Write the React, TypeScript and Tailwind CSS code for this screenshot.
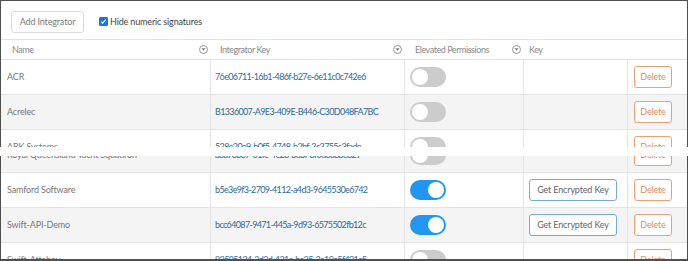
import React from "react";

type Item = { name: string; id: string; on: boolean; gray: boolean };

const top: Item[] = [
  { name: "ACR", id: "76e06711-16b1-486f-b27e-6e11c0c742e6", on: false, gray: false },
  { name: "Acrelec", id: "B1336007-A9E3-409E-B446-C30D048FA7BC", on: false, gray: true },
  { name: "ARK Systems", id: "528e20e9-b0f5-4748-b2bf-3c3755c3fade", on: false, gray: false },
];

const bottom: Item[] = [
  { name: "Royal Queensland Yacht Squadron", id: "a8a78b87-01fe-4e28-bdbf-8f6d8a8be827", on: false, gray: true },
  { name: "Samford Software", id: "b5e3e9f3-2709-4112-a4d3-9645530e6742", on: true, gray: false },
  { name: "Swift-API-Demo", id: "bcc64087-9471-445a-9d93-6575502fb12c", on: true, gray: true },
  { name: "Swift-Attaboy", id: "92595124-2d2d-431e-ba25-3e19e5f421c5", on: false, gray: false },
];

const cols = "grid grid-cols-[210px_194px_119px_104px_1fr]";

function FilterIcon() {
  return (
    <svg width="9" height="9" viewBox="0 0 9 9" className="shrink-0">
      <circle cx="4.5" cy="4.5" r="4" fill="none" stroke="#8a8a8a" strokeWidth="0.9" />
      <path d="M2.5 3.3h4L4.5 5.8z" fill="#7a7a7a" />
    </svg>
  );
}

function Toggle({ on }: { on: boolean }) {
  return (
    <div
      className={`flex h-[20px] w-[36px] items-center rounded-full px-[2px] ${
        on ? "justify-end bg-[#2196f3]" : "justify-start bg-[#cccccc]"
      }`}
    >
      <div className="h-[16px] w-[16px] rounded-full bg-white" />
    </div>
  );
}

function Row({ item }: { item: Item }) {
  return (
    <div className={`${cols} h-[35px] border-b border-[#e4e4e4] ${item.gray ? "bg-[#f4f4f4]" : "bg-white"}`}>
      <div className="flex items-center border-r border-[#e4e4e4] pl-[6px] text-[#777]">{item.name}</div>
      <div className="flex items-center whitespace-nowrap border-r border-[#e4e4e4] pl-[4px] tracking-[-0.65px] text-[#2f6a9a]">
        {item.id}
      </div>
      <div className="flex items-center border-r border-[#e4e4e4] pl-[5px]">
        <Toggle on={item.on} />
      </div>
      <div className="flex items-center border-r border-[#e4e4e4] pl-[5px]">
        {item.on && (
          <button className="h-[22px] w-[88px] rounded-[3px] border border-[#78a9dc] bg-white text-[#666]">
            Get Encrypted Key
          </button>
        )}
      </div>
      <div className="flex items-center pl-[6px]">
        <button className="h-[22px] w-[38px] rounded-[3px] border border-[#e9a273] bg-white text-[#de8f5b]">
          Delete
        </button>
      </div>
    </div>
  );
}

export default function App() {
  return (
    <div className="h-[261px] w-[688px] bg-white font-['Lato',sans-serif] text-[9px] tracking-[-0.15px]">
      <div className="border-x border-t border-[#505050]">
        <div className="flex h-[38px] items-start gap-[15px] pl-[10px] pt-[10px]">
          <button className="h-[22px] w-[73px] rounded-[3px] border border-[#dcdcdc] bg-white text-[#7a7a7a]">
            Add Integrator
          </button>
          <label className="mt-[4px] flex items-center gap-[2px] text-[#444]">
            <span className="flex h-[9px] w-[9px] items-center justify-center rounded-[1.5px] bg-[#1a73e8]">
              <svg width="7" height="7" viewBox="0 0 7 7">
                <path d="M1.2 3.6l1.5 1.5 3-3.4" fill="none" stroke="white" strokeWidth="1.2" />
              </svg>
            </span>
            Hide numeric signatures
          </label>
        </div>
        <div className={`${cols} h-[21px] border-y border-[#e4e4e4] tracking-[-0.45px] text-[#8a8a8a]`}>
          <div className="flex items-center justify-between pl-[11px] pr-[3px]">
            <span>Name</span>
            <FilterIcon />
          </div>
          <div className="flex items-center justify-between pl-[9px] pr-[3px]">
            <span>Integrator Key</span>
            <FilterIcon />
          </div>
          <div className="flex items-center justify-between pl-[10px] pr-[3px]">
            <span>Elevated Permissions</span>
            <FilterIcon />
          </div>
          <div className="flex items-center pl-[5px]">Key</div>
          <div />
        </div>
        <Row item={top[0]} />
        <Row item={top[1]} />
        <div className="h-[17px] overflow-hidden">
          <Row item={top[2]} />
        </div>
      </div>
      <div className="h-[9px] bg-white" />
      <div className="h-[105px] overflow-hidden border-x border-b-2 border-[#505050]">
        <div className="-mt-[18px]">
          {bottom.map((item) => (
            <Row key={item.name} item={item} />
          ))}
        </div>
      </div>
    </div>
  );
}
